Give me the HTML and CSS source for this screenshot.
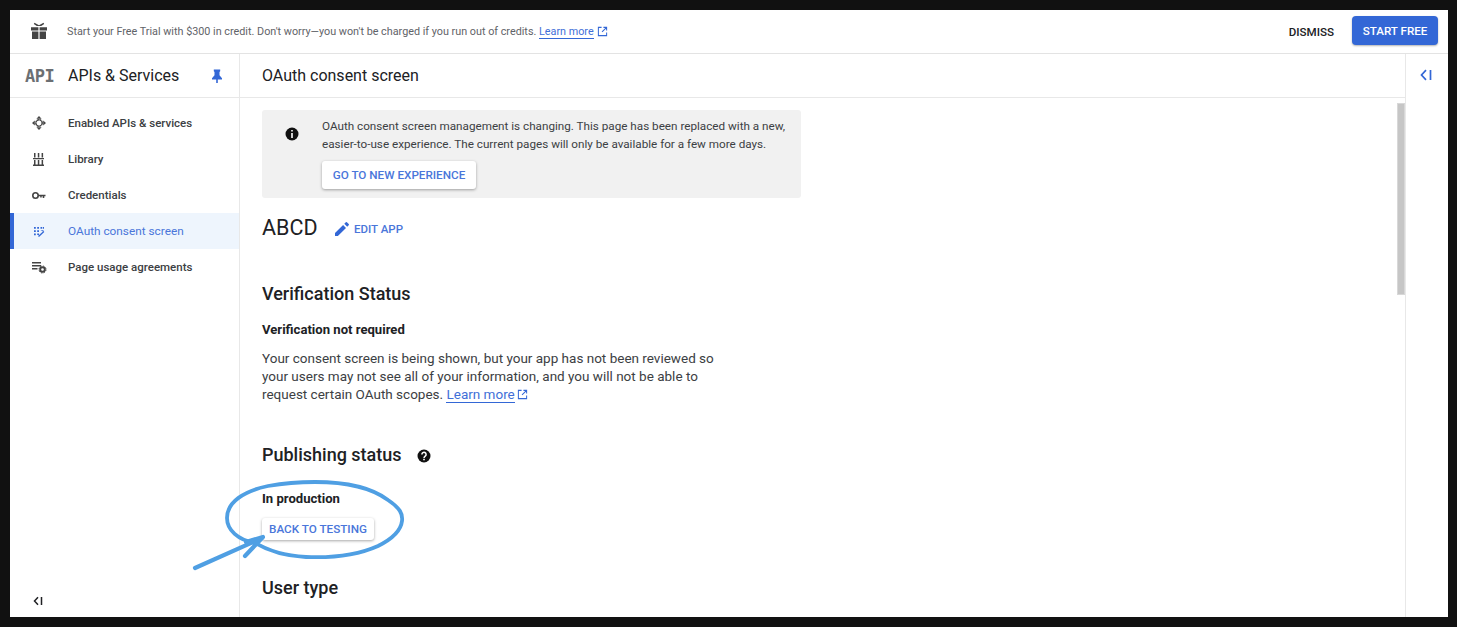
FILE: index.html
```html
<!DOCTYPE html>
<html lang="en">
<head>
<meta charset="utf-8">
<title>OAuth consent screen</title>
<link rel="stylesheet" href="styles.css">
</head>
<body>
<div class="app">
  <header class="banner">
    <svg class="gift" viewBox="0 0 18 18" width="18" height="18"><path fill="#444" d="M1 5.200h7.400v3.300H1zM9.600 5.200H17v3.300H9.600zM2 9.600h6.400V17H2zM9.600 9.600H16V17H9.600zM4.500.8 9 3.200 13.500.8l.7 1.300-3 1.900H6.800l-3-1.900z"/></svg>
    <p class="banner-text">Start your Free Trial with $300 in credit. Don't worry—you won't be charged if you run out of credits. <a class="link">Learn more</a><svg class="ext" viewBox="0 0 12 12" width="11" height="11"><path fill="none" stroke="#3367d6" stroke-width="1.100" d="M5 1.500H1.500v9h9V7M7 1.500h3.500V5M10.500 1.500 5.500 6.500"/></svg></p>
    <span class="dismiss">DISMISS</span>
    <button class="start">START FREE</button>
  </header>
  <div class="main">
    <aside class="sidebar">
      <div class="side-head">
        <span class="api">API</span>
        <span class="side-title">APIs &amp; Services</span>
        <svg class="pin" viewBox="0 0 12 14" width="12" height="14"><path fill="#3367d6" d="M2.800.6h6.400v1.600L8.500 3v3.300L11 9.200v1.300H6.800V14H5.200v-3.500H1V9.200l2.500-2.900V3l-.7-.8z"/></svg>
      </div>
      <nav class="nav">
        <a class="nav-item"><svg class="nav-icon" viewBox="0 0 16 16"><path fill="#444" d="M8 1l2.600 2.800H5.400zM8 15l-2.600-2.800h5.200zM1 8l2.800-2.600v5.200zM15 8l-2.800 2.600V5.400z"/><circle cx="8" cy="8" r="3.200" fill="none" stroke="#444" stroke-width="1.500" stroke-dasharray="2.200 .3"/></svg>Enabled APIs &amp; services</a>
        <a class="nav-item"><svg class="nav-icon" viewBox="0 0 16 16"><path fill="#444" d="M3 2h1.500v4.500H3zM6.800 2h1.500v4.500H6.800zM10.600 2h1.500v4.500h-1.500zM2 7h11v1.300H2zM3 9h1.500v4.500H3zM6.800 9h1.500v4.500H6.800zM10.600 9h1.500v4.500h-1.500zM2 13.500h11V15H2z"/></svg>Library</a>
        <a class="nav-item"><svg class="nav-icon" viewBox="0 0 16 16"><circle cx="4.500" cy="8.500" r="2.700" fill="none" stroke="#444" stroke-width="1.600"/><path fill="#444" d="M7 7.700h7.500v1.600h-1.200v1.700h-1.600V9.300h-1v1.200H9.200V9.300H7z"/></svg>Credentials</a>
        <a class="nav-item active"><svg class="nav-icon" viewBox="0 0 16 16"><path fill="#3367d6" d="M3 4h1.800v1.800H3zM3 7.200h1.800V9H3zM3 10.500h1.800v1.800H3zM6.200 4H8v1.800H6.200zM6.200 7.200H8V9H6.200zM9.500 4h1.800v1.800H9.500zM9.500 7.200h3v1.500zM7 13l5.500-5 .8 1-5.300 5zM6.200 10.500H8v1.500H6.200zM12 4h1v1.800h-1z"/></svg>OAuth consent screen</a>
        <a class="nav-item"><svg class="nav-icon" viewBox="0 0 16 16"><path fill="#444" d="M1 3h9v1.400H1zM1 6h9v1.400H1zM1 9h5.500v1.400H1z"/><circle cx="11.500" cy="10.500" r="2.300" fill="none" stroke="#444" stroke-width="1.900"/><circle cx="11.500" cy="10.500" r="3.500" fill="none" stroke="#444" stroke-width="1" stroke-dasharray="1.500 1.250"/></svg>Page usage agreements</a>
      </nav>
      <svg class="collapse" viewBox="0 0 10 10" width="10" height="10"><path fill="none" stroke="#202124" stroke-width="1.500" d="M5 1.200 1.500 5 5 8.800M8.500 1v8"/></svg>
    </aside>
    <div class="content">
      <div class="page-head">OAuth consent screen</div>
      <div class="scroll">
        <section class="body">
          <div class="notice">
            <svg class="notice-icon" viewBox="0 0 14 14" width="14" height="14"><circle cx="7" cy="7" r="6.500" fill="#111"/><path fill="#fff" d="M6.200 3h1.600v1.600H6.200zM6.200 6h1.600v5H6.200z"/></svg>
            <div class="notice-body">
              <p class="notice-text">OAuth consent screen management is changing. This page has been replaced with a new, easier-to-use experience. The current pages will only be available for a few more days.</p>
              <button class="raised go">GO TO NEW EXPERIENCE</button>
            </div>
          </div>
          <div class="app-row">
            <h1 class="app-name">ABCD</h1>
            <svg class="edit-icon" viewBox="0 0 14 14" width="14" height="14"><path fill="#3367d6" d="M0 11.100V14h2.900l8.100-8.100-2.900-2.900zM13.700 3.200a.8.8 0 0 0 0-1.100L11.900.3a.8.8 0 0 0-1.100 0L9.300 1.800l2.900 2.900z"/></svg>
            <span class="edit-label">EDIT APP</span>
          </div>
          <h2 class="h-verify">Verification Status</h2>
          <h3 class="h-sub1">Verification not required</h3>
          <p class="para">Your consent screen is being shown, but your app has not been reviewed so your users may not see all of your information, and you will not be able to request certain OAuth scopes. <a class="link">Learn more</a><svg class="ext2" viewBox="0 0 12 12" width="11" height="11"><path fill="none" stroke="#3367d6" stroke-width="1.100" d="M5 1.500H1.500v9h9V7M7 1.500h3.500V5M10.500 1.500 5.500 6.500"/></svg></p>
          <div class="pub-row">
            <h2 class="h-pub">Publishing status</h2>
            <svg class="help" viewBox="0 0 14 14" width="14" height="14"><circle cx="7" cy="7" r="6.500" fill="#111"/><path fill="none" stroke="#fff" stroke-width="1.500" d="M4.900 5.400a2.100 2.100 0 1 1 3.300 1.700C7.400 7.700 7 8 7 9"/><path fill="#fff" d="M6.200 9.800h1.600v1.500H6.200z"/></svg>
          </div>
          <h3 class="h-sub2">In production</h3>
          <button class="raised back">BACK TO TESTING</button>
          <h2 class="h-user">User type</h2>
        </section>
        <div class="track"><div class="thumb"></div></div>
      </div>
    </div>
    <aside class="rail">
      <svg viewBox="0 0 12 12" width="12" height="12"><path fill="none" stroke="#3367d6" stroke-width="1.700" d="M6 1.200 1.500 6 6 10.800M10.500 1v10"/></svg>
    </aside>
  </div>
</div>
<svg class="scribble" viewBox="0 0 1457 627" width="1457" height="627">
  <path fill="none" stroke="#4f9fe3" stroke-width="3.800" stroke-linecap="round" stroke-linejoin="round" d="M255 543C238 540 227 530 227 518C227 502 244 491 268 486C285 483 300 482 315 482C345 482 372 488 388 500C400 508 403 514 402 521C401 530 392 539 378 546C358 555 330 558 306 557C285 556 266 550 252 541"/>
  <path fill="none" stroke="#4f9fe3" stroke-width="4.200" stroke-linecap="round" stroke-linejoin="round" d="M195 568 262 538M246 542 263 537 245 556"/>
</svg>
</body>
</html>
```
FILE: styles.css
```css
* { box-sizing: border-box; }
html, body { margin: 0; height: 100%; }
body {
  background: #111;
  padding: 10px 9px 10px 10px;
  font-family: Roboto, "Liberation Sans", sans-serif;
  color: #202124;
  overflow: hidden;
  position: relative;
}
p, h1, h2, h3 { margin: 0; }
.app {
  width: 1438px;
  height: 607px;
  background: #fff;
  display: flex;
  flex-direction: column;
}
.banner {
  height: 44px;
  flex: none;
  display: flex;
  align-items: center;
  border-bottom: 1px solid #e3e3e3;
  padding: 0 10px 0 20px;
}
.gift { flex: none; width: 18px; height: 18px; margin-top: -2px; }
.banner-text {
  margin-left: 19px;
  font-size: 10.800px;
  color: #5f6368;
  flex: 1;
  white-space: nowrap;
}
.link { color: #3f6fd8; border-bottom: 1px solid #3367d6; }
.ext { margin-left: 3px; vertical-align: -2px; }
.ext2 { margin-left: 2px; vertical-align: -1px; }
.dismiss { font-size: 11.600px; font-weight: 500; color: #202124; margin-right: 18px; }
.start {
  width: 86px;
  height: 29px;
  border: 0;
  border-radius: 4px;
  background: #3367d6;
  color: #fff;
  font: 500 11.600px Roboto, sans-serif;
  box-shadow: 0 1px 2px rgba(0,0,0,.3);
  margin-top: -2px;
}
.main { flex: 1; display: flex; min-height: 0; }
.sidebar {
  width: 230px;
  flex: none;
  border-right: 1px solid #e8e8e8;
  display: flex;
  flex-direction: column;
  position: relative;
}
.side-head {
  height: 44px;
  display: flex;
  align-items: center;
  border-bottom: 1px solid #e8e8e8;
  padding-left: 15px;
}
.api {
  font-family: "DejaVu Sans Mono", monospace;
  font-size: 17px;
  font-weight: 700;
  color: #6b6f73;
  width: 43px;
  letter-spacing: -.5px;
  flex: none;
}
.side-title { font-size: 16px; flex: 1; }
.pin { margin-right: 16px; flex: none; }
.nav { padding-top: 7px; display: flex; flex-direction: column; }
.nav-item {
  height: 36px;
  display: flex;
  align-items: center;
  font-size: 11.500px;
  font-weight: 500;
  color: #3c4043;
  padding-left: 21px;
}
.nav-item.active {
  color: #4a76da;
  background: #eef5fd;
  border-left: 4px solid #3367d6;
  padding-left: 17px;
  font-weight: 400;
  font-size: 11.800px;
}
.nav-icon { width: 16px; height: 16px; margin-right: 21px; flex: none; }
.collapse { position: absolute; left: 23px; bottom: 11px; }
.content { flex: 1; min-width: 0; display: flex; flex-direction: column; }
.page-head {
  height: 44px;
  flex: none;
  display: flex;
  align-items: center;
  padding-left: 22px;
  font-size: 16px;
  border-bottom: 1px solid #e8e8e8;
}
.scroll { flex: 1; display: flex; min-height: 0; overflow: hidden; }
.body { flex: 1; padding: 12px 0 0 22px; min-width: 0; }
.notice {
  width: 539px;
  height: 88px;
  background: #f1f1f1;
  border-radius: 3px;
  display: flex;
  padding: 8px 0 0 23px;
}
.notice-icon { flex: none; margin: 9px 0 0; }
.notice-body { margin-left: 23px; width: 480px; }
.notice-text { font-size: 11.700px; line-height: 17.500px; color: #3c4043; }
.raised {
  border: 0;
  background: #fff;
  border-radius: 3px;
  color: #4a76da;
  font: 500 11.700px Roboto, sans-serif;
  box-shadow: 0 1px 3px rgba(0,0,0,.35);
  padding: 0;
}
.go { width: 154px; height: 28px; margin-top: 8px; display: block; }
.app-row { display: flex; align-items: center; height: 32px; margin-top: 13px; }
.app-name { font-size: 21.500px; font-weight: 400; width: 73px; }
.edit-icon { flex: none; margin-top: 3px; }
.edit-label { font-size: 11.500px; font-weight: 500; color: #4a76da; margin-left: 5px; margin-top: 3px; }
.h-verify, .h-pub, .h-user { font-size: 18px; font-weight: 500; line-height: 24px; }
.h-verify { margin-top: 39px; }
.h-sub1, .h-sub2 { font-size: 13.100px; font-weight: 700; line-height: 18px; }
.h-sub1 { margin-top: 15px; }
.para { font-size: 13.500px; line-height: 18px; width: 470px; margin-top: 10px; color: #3c4043; }
.pub-row { display: flex; align-items: center; margin-top: 40px; }
.h-pub { width: 155px; }
.help { flex: none; margin-top: 2px; }
.h-sub2 { margin-top: 23px; }
.back { display: block; width: 112px; height: 22px; margin-top: 10px; }
.h-user { margin-top: 36px; }
.track { width: 14px; flex: none; padding: 5px 0 0 6px; background: #fff; }
.thumb { width: 8px; height: 192px; background: #c6c6c6; border: 1px solid #d8d8d8; }
.rail {
  width: 43px;
  flex: none;
  border-left: 1px solid #e8e8e8;
  display: flex;
  justify-content: center;
  padding: 15px 2px 0 0;
}
.scribble { position: absolute; left: 0; top: 0; pointer-events: none; }
```
